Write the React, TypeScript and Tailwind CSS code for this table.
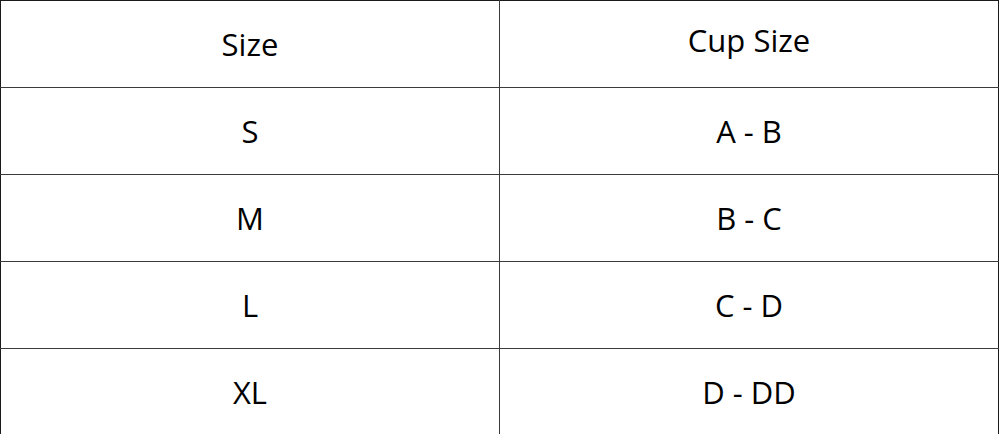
const ROWS: [string, string][] = [
  ['S', 'A - B'],
  ['M', 'B - C'],
  ['L', 'C - D'],
  ['XL', 'D - DD'],
]

export default function App() {
  return (
    <div className="h-[434px] w-[1000px] overflow-hidden bg-white font-['Open_Sans','Lato',sans-serif] text-[31px] text-black">
      <table className="w-[999px] table-fixed border-collapse border border-[#1a1a1a]">
        <thead>
          <tr className="h-[87px]">
            <th className="border border-[#3a3a3a] border-t-[#1a1a1a] border-l-[#1a1a1a] text-center font-normal">
              Size
            </th>
            <th className="border border-[#3a3a3a] border-t-[#1a1a1a] border-r-[#1a1a1a] pb-2 text-center font-normal">
              Cup Size
            </th>
          </tr>
        </thead>
        <tbody>
          {ROWS.map(([size, cup]) => (
            <tr key={size} className="h-[87px]">
              <td className="border border-[#3a3a3a] border-l-[#1a1a1a] text-center">
                {size}
              </td>
              <td className="border border-[#3a3a3a] border-r-[#1a1a1a] text-center">
                {cup}
              </td>
            </tr>
          ))}
        </tbody>
      </table>
    </div>
  )
}
